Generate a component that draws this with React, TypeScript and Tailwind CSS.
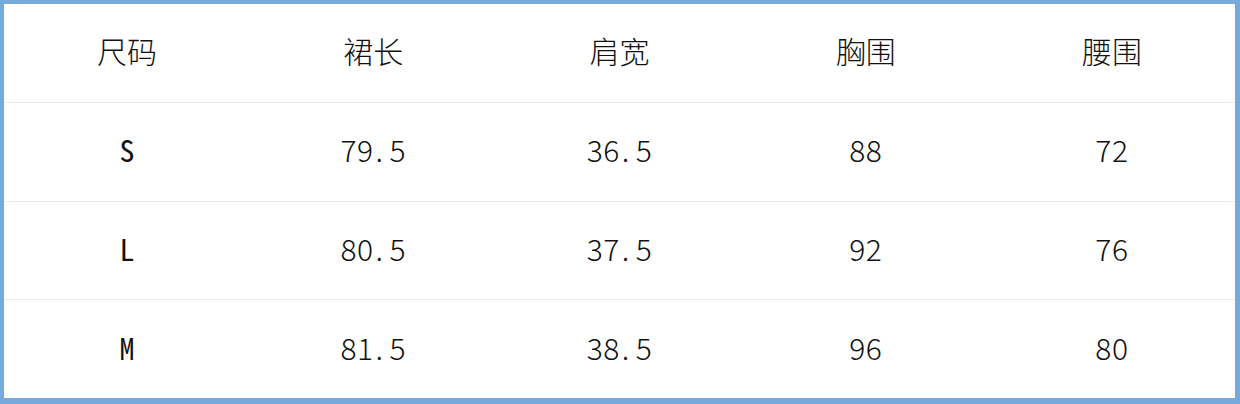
import React from "react";

const header = ["尺码", "裙长", "肩宽", "胸围", "腰围"];
const rows = [
  ["S", "79.5", "36.5", "88", "72"],
  ["L", "80.5", "37.5", "92", "76"],
  ["M", "81.5", "38.5", "96", "80"],
];

function Num({ v }: { v: string }) {
  const parts = v.split(".");
  if (parts.length === 1) return <>{v}</>;
  return (
    <>
      {parts[0]}
      <span className="ml-[2px] mr-[6px]">.</span>
      {parts[1]}
    </>
  );
}

export default function App() {
  return (
    <div className="w-[1240px] h-[404px] bg-white border-[#76a9dc] border-t-4 border-l-4 border-r-[5px] border-b-[6px] flex flex-col text-[30px] font-light text-[#111] [font-family:'Noto_Sans_CJK_SC',sans-serif]">
      {[header, ...rows].map((r, i) => (
        <div key={i} className={`flex-1 grid grid-cols-5 items-center pb-[5px] ${i < 3 ? "border-b border-[#ebebef]" : ""}`}>
          {r.map((c, j) => (
            <div
              key={j}
              className={`text-center leading-none ${
                i > 0 && j === 0 ? "[font-feature-settings:'hwid'] font-normal" : i > 0 ? "tracking-[0.5px]" : ""
              }`}
            >
              {i > 0 && j > 0 ? <Num v={c} /> : c}
            </div>
          ))}
        </div>
      ))}
    </div>
  );
}
